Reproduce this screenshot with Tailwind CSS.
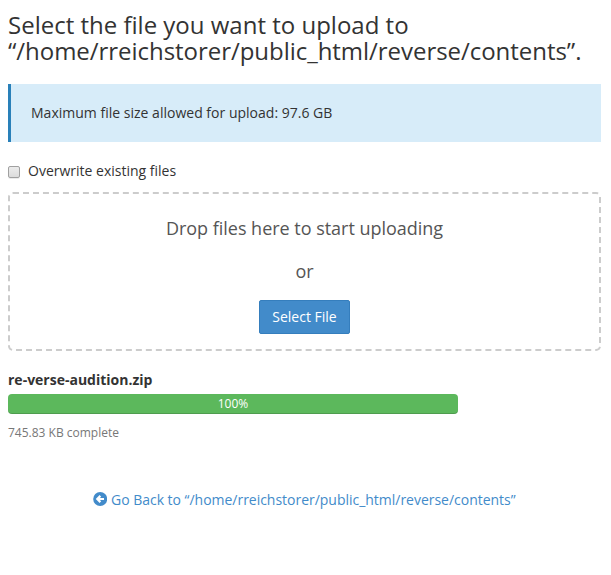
<!DOCTYPE html>
<html lang="en">
<head>
<meta charset="utf-8">
<title>Upload Files</title>
<script src="https://cdn.jsdelivr.net/npm/@tailwindcss/browser@4"></script>
</head>
<body class="bg-white font-['Open_Sans',sans-serif] text-[14px] leading-5 text-[#333]">
<main class="flex flex-col pl-2 pr-[10px] pt-3">
  <h1 class="text-[24px] leading-[26px] font-normal whitespace-nowrap">Select the file you want to upload to<br><span class="tracking-[-0.04px]">“/home/rreichstorer/public_html/reverse/contents”.</span></h1>
  <div class="mt-5 flex h-[58px] items-center border-l-3 border-[#2980b9] bg-[#d7ecf9] pl-5 tracking-[0.01px]">Maximum file size allowed for upload: 97.6 GB</div>
  <label class="mt-[19px] flex h-5 items-center">
    <input type="checkbox" class="mt-[2px] mr-2 size-3 appearance-none rounded-[2px] border border-[#a0a0a0] bg-linear-to-b from-[#ececec] to-[#dcdcdc] shadow-[0_1px_0_rgba(0,0,0,0.08)]">
    Overwrite existing files
  </label>
  <section class="mt-[11px] flex h-[159px] flex-col items-center rounded-[5px] border-2 border-dashed border-[#ccc] text-[18px] leading-[26px] text-[#555]">
    <p class="mt-[21px] tracking-[-0.02px]">Drop files here to start uploading</p>
    <p class="mt-[17px]">or</p>
    <button class="mt-[16px] h-[34px] w-[91px] rounded-[2px] border border-[#357ebd] bg-[#428bca] text-[14px] leading-5 text-white">Select File</button>
  </section>
  <h2 class="mt-[19px] font-bold">re-verse-audition.zip</h2>
  <div class="mt-1 h-5 w-[450px] rounded-[4px] bg-[#5cb85c] text-center text-[12px] leading-5 text-white shadow-[inset_0_-1px_0_rgba(0,0,0,0.15)]">100%</div>
  <p class="mt-[9px] text-[12px] text-[#777]">745.83 KB complete</p>
  <a class="mt-[47px] ml-[85px] flex items-center tracking-[-0.02px] text-[#428bca]">
    <svg class="relative -top-px mr-[4px] size-[14px]" viewBox="0 0 14 14"><circle cx="7.2" cy="7" r="7" fill="#428bca"/><path d="M7.4 3.9 4.3 7l3.1 3.1M4.6 7H11" fill="none" stroke="white" stroke-width="2.2"/></svg>
    Go Back to “/home/rreichstorer/public_html/reverse/contents”
  </a>
</main>
</body>
</html>
